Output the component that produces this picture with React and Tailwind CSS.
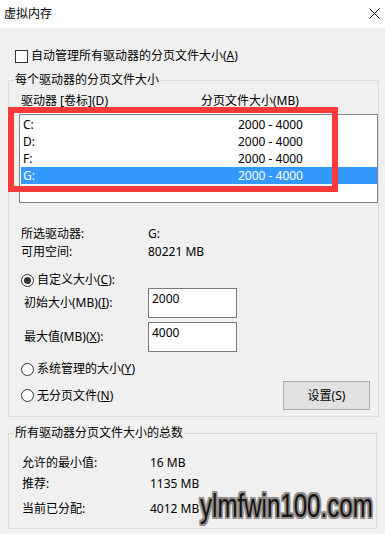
import React from "react";

const Radio = ({ checked }) => (
  <span className="relative flex h-[13px] w-[13px] shrink-0 items-center justify-center rounded-full border border-[#333] bg-white">
    {checked && <span className="h-[7px] w-[7px] rounded-full bg-[#333]" />}
  </span>
);

const rows = [
  { d: "C:", v: "2000 - 4000" },
  { d: "D:", v: "2000 - 4000" },
  { d: "F:", v: "2000 - 4000" },
  { d: "G:", v: "2000 - 4000", sel: true },
];

export default function App() {
  return (
    <div className="relative h-[534px] w-[385px] overflow-hidden bg-[#f0f0f0] font-['Noto_Sans','Noto_Sans_CJK_SC',sans-serif] text-[12px] leading-[16px] text-black">
      {/* Title bar */}
      <div className="flex h-[28px] items-center justify-between bg-white pl-[4px] pr-[5px]">
        <span className="mb-[1px]">虚拟内存</span>
        <svg width="11" height="11" viewBox="0 0 11 11" className="mb-[1px]">
          <path d="M0.5 0.5 L10.5 10.5 M10.5 0.5 L0.5 10.5" stroke="#000" strokeWidth="1" fill="none" />
        </svg>
      </div>

      <div className="px-[8px] pt-[20px]">
        {/* Auto manage checkbox */}
        <div className="flex h-[16px] items-center pl-[7px]">
          <span className="h-[13px] w-[13px] shrink-0 border border-[#333] bg-white" />
          <span className="ml-[3px]">
            自动管理所有驱动器的分页文件大小(<u>A</u>)
          </span>
        </div>

        {/* Group 1 */}
        <fieldset className="mt-[8px] h-[345px] border border-[#dcdcdc]">
          <legend className="ml-[5px] px-px text-[12px] leading-[16px]">每个驱动器的分页文件大小</legend>
          <div className="mt-[5px] flex h-[16px] pl-[12px]">
            <span className="w-[180px]">驱动器 [卷标](D)</span>
            <span>分页文件大小(MB)</span>
          </div>
          <div className="ml-[10px] mt-[5px] h-[89px] w-[359px] border border-[#828790] bg-white pl-px pt-px">
            {rows.map((r) => (
              <div
                key={r.d}
                className={
                  "flex h-[17px] items-center justify-between pl-[2px] pr-[74px] " +
                  (r.sel ? "bg-[#3399ff] text-white" : "")
                }
              >
                <span>{r.d}</span>
                <span>{r.v}</span>
              </div>
            ))}
          </div>

          <div className="mt-[22px] flex h-[18px] items-center pl-[12px]">
            <span className="w-[127px]">所选驱动器:</span>
            <span>G:</span>
          </div>
          <div className="flex h-[18px] items-center pl-[12px]">
            <span className="w-[127px]">可用空间:</span>
            <span>80221 MB</span>
          </div>

          <div className="mt-[10px] flex h-[18px] items-center pl-[12px]">
            <Radio checked />
            <span className="ml-[3px]">
              自定义大小(<u>C</u>):
            </span>
          </div>
          <div className="-mt-px flex h-[30px] items-center pl-[15px]">
            <span className="w-[124px]">
              初始大小(MB)(<u>I</u>):
            </span>
            <div className="h-[30px] w-[89px] border border-[#7a7a7a] bg-white pl-[3px] pt-[2px]">2000</div>
          </div>
          <div className="mt-[4px] flex h-[30px] items-center pl-[15px]">
            <span className="w-[124px]">
              最大值(MB)(<u>X</u>):
            </span>
            <div className="h-[30px] w-[89px] border border-[#7a7a7a] bg-white pl-[3px] pt-[2px]">4000</div>
          </div>
          <div className="mt-[8px] flex h-[18px] items-center pl-[12px]">
            <Radio />
            <span className="ml-[3px]">
              系统管理的大小(<u>Y</u>)
            </span>
          </div>
          <div className="mt-[3px] flex h-[29px] items-center justify-between pl-[12px] pr-[8px]">
            <div className="flex items-center">
              <Radio />
              <span className="ml-[3px]">
                无分页文件(<u>N</u>)
              </span>
            </div>
            <div className="flex h-[29px] w-[87px] items-center justify-center border border-[#adadad] bg-[#e1e1e1]">
              设置(S)
            </div>
          </div>
        </fieldset>

        {/* Group 2 */}
        <fieldset className="mt-[8px] h-[104px] border border-[#dcdcdc]">
          <legend className="ml-[5px] px-px text-[12px] leading-[16px]">所有驱动器分页文件大小的总数</legend>
          <div className="mt-[13px] flex h-[18px] items-center pl-[13px]">
            <span className="w-[128px]">允许的最小值:</span>
            <span>16 MB</span>
          </div>
          <div className="mt-[3px] flex h-[18px] items-center pl-[13px]">
            <span className="w-[128px]">推荐:</span>
            <span>1135 MB</span>
          </div>
          <div className="mt-[7px] flex h-[18px] items-center pl-[13px]">
            <span className="w-[128px]">当前已分配:</span>
            <span>4012 MB</span>
          </div>
        </fieldset>
      </div>

      {/* Red highlight overlay */}
      <div className="pointer-events-none absolute left-[8px] top-[107px] h-[85px] w-[330px] border-[6px] border-[#f93a3a]" />

      {/* Watermark */}
      <div className="pointer-events-none absolute left-[200px] top-[489px] origin-left scale-x-[0.73] font-['Liberation_Sans',sans-serif] text-[33px] leading-none text-[#141414] [text-shadow:2px_0_0_#958d8a,-2px_0_0_#958d8a,0_2px_0_#958d8a,0_-2px_0_#958d8a,2px_2px_0_#958d8a,-2px_-2px_0_#958d8a,2px_-2px_0_#958d8a,-2px_2px_0_#958d8a,0_0_4px_#b8b2b0]">
        ylmfwin100.com
      </div>
    </div>
  );
}
